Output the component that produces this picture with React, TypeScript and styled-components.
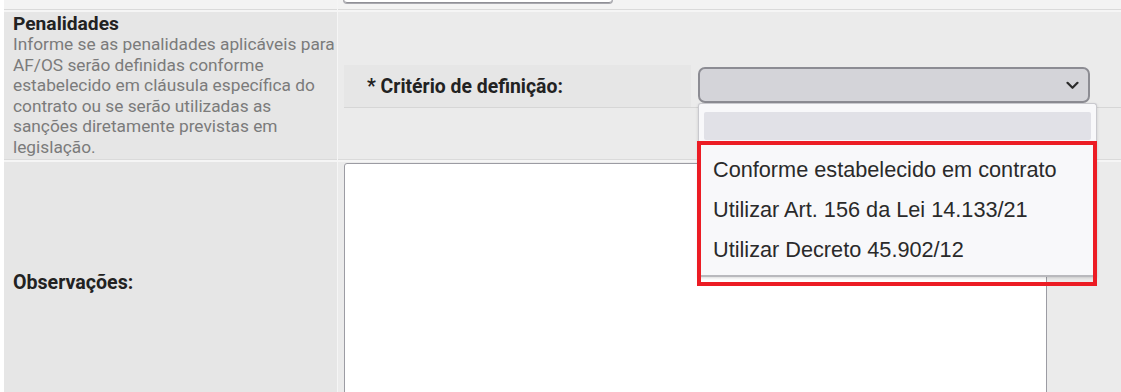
import React from 'react';
import styled, { createGlobalStyle } from 'styled-components';

const Global = createGlobalStyle`
  html, body { margin: 0; padding: 0; background: #ffffff; }
  body {
    width: 1121px;
    height: 392px;
    overflow: hidden;
    font-family: Roboto, "Liberation Sans", Arial, sans-serif;
  }
`;

const Page = styled.div`
  padding-left: 4px;
  height: 392px;
  overflow: hidden;
  background: #ffffff;
`;

const Table = styled.div`
  display: grid;
  grid-template-columns: 333px 1fr;
  grid-template-rows: 10px 148px 240px;
  row-gap: 2px;
  column-gap: 1px;
  background: #f5f5f5;
`;

const Cell = styled.div<{ $tone: 'label' | 'field' | 'top' }>`
  background: ${(p) =>
    p.$tone === 'label' ? '#e6e6e6' : p.$tone === 'field' ? '#ebebeb' : '#f3f3f3'};
  border-bottom: 1px solid #dadada;
  box-sizing: border-box;
  min-width: 0;
`;

const TopField = styled(Cell)`
  display: flex;
  align-items: flex-end;
  padding: 0 0 5px 5px;
  overflow: hidden;
`;

const TopInput = styled.div`
  width: 268px;
  height: 30px;
  background: #ffffff;
  border: 1px solid #a8a8ae;
  border-top: 0;
  border-radius: 0 0 4px 4px;
  box-shadow: inset 0 -1px 0 #8f8f96;
`;

const HelpCell = styled(Cell)`
  padding: 1px 0 0 9px;
`;

const Title = styled.div`
  font-weight: 700;
  font-size: 19.2px;
  line-height: 21px;
  color: #222222;
`;

const Help = styled.div`
  font-size: 17.3px;
  line-height: 20.6px;
  color: #7b7b7b;
`;

const SubTable = styled(Cell)`
  display: grid;
  grid-template-rows: 53px 43px 1fr;
  padding-left: 6px;
`;

const SubRow = styled.div<{ $line?: boolean }>`
  display: flex;
  align-items: stretch;
  border-bottom: ${(p) => (p.$line ? '1px solid #d6d6d6' : '0')};
`;

const SubLabel = styled.div`
  width: 347px;
  flex: none;
  background: #e6e6e6;
  display: flex;
  align-items: center;
  padding-left: 23px;
  box-sizing: border-box;
  font-weight: 700;
  font-size: 19.4px;
  color: #222222;
`;

const SelectWrap = styled.div`
  position: relative;
  margin-left: 7px;
  padding-top: 2px;
`;

const SelectBox = styled.div`
  width: 392px;
  height: 36px;
  box-sizing: border-box;
  background: #d4d4d9;
  border: 2px solid #8c8c93;
  border-radius: 7px;
  display: flex;
  align-items: center;
  justify-content: flex-end;
  padding-right: 9px;
`;

const Dropdown = styled.div`
  position: absolute;
  left: 0;
  top: 38px;
  width: 399px;
  box-sizing: border-box;
  background: #f8f8fa;
  border: 1px solid #c9c9ce;
  border-bottom: 0;
  border-radius: 3px 3px 0 0;
  box-shadow: 0 1px 3px rgba(0, 0, 0, 0.15);
  padding: 8px 5px 0 5px;
  z-index: 5;
`;

const Option = styled.div<{ $empty?: boolean }>`
  height: ${(p) => (p.$empty ? '28px' : '40px')};
  margin-bottom: ${(p) => (p.$empty ? '10px' : '0')};
  background: ${(p) => (p.$empty ? '#e1e1e7' : 'transparent')};
  border-radius: 2px;
  display: flex;
  align-items: center;
  padding-left: 9px;
  font-family: "Liberation Sans", Arial, sans-serif;
  font-size: 21.7px;
  color: #2a2a2a;
  white-space: nowrap;
`;

const ListEnd = styled.div`
  margin: 5px -5px 0;
  border-top: 2px solid #b9b9bd;
`;

const Highlight = styled.div`
  position: absolute;
  left: -1px;
  top: 76px;
  width: 400px;
  height: 145px;
  box-sizing: border-box;
  border: 4px solid #ec1c24;
  z-index: 6;
  pointer-events: none;
`;

const LabelCell = styled(Cell)`
  display: flex;
  align-items: center;
  padding-left: 9px;
  padding-top: 2px;
  font-weight: 700;
  font-size: 19.6px;
  color: #222222;
`;

const AreaCell = styled(Cell)`
  padding: 1px 0 0 6px;
`;

const TextArea = styled.textarea`
  display: block;
  width: 703px;
  height: 240px;
  box-sizing: border-box;
  border: 1.5px solid #9c9ca3;
  border-radius: 3px;
  background: #ffffff;
  resize: both;
  outline: none;
`;

function Chevron() {
  return (
    <svg width="13" height="9" viewBox="0 0 13 9" aria-hidden="true">
      <path d="M1.5 1.8 L6.5 6.8 L11.5 1.8" fill="none" stroke="#2b2b2b" strokeWidth="2.2" strokeLinecap="round" strokeLinejoin="round" />
    </svg>
  );
}

export default function App() {
  return (
    <>
      <Global />
      <Page>
        <Table>
          <Cell $tone="top" />
          <TopField $tone="top">
            <TopInput />
          </TopField>

          <HelpCell $tone="label">
            <Title>Penalidades</Title>
            <Help>
              Informe se as penalidades aplicáveis para AF/OS serão definidas conforme estabelecido em
              cláusula específica do contrato ou se serão utilizadas as sanções diretamente previstas em
              legislação.
            </Help>
          </HelpCell>
          <SubTable $tone="field">
            <SubRow />
            <SubRow $line>
              <SubLabel>* Critério de definição:</SubLabel>
              <SelectWrap>
                <SelectBox>
                  <Chevron />
                </SelectBox>
                <Dropdown>
                  <Option $empty />
                  <Option>Conforme estabelecido em contrato</Option>
                  <Option>Utilizar Art. 156 da Lei 14.133/21</Option>
                  <Option>Utilizar Decreto 45.902/12</Option>
                  <ListEnd />
                </Dropdown>
                <Highlight />
              </SelectWrap>
            </SubRow>
            <SubRow />
          </SubTable>

          <LabelCell $tone="label">Observações:</LabelCell>
          <AreaCell $tone="field">
            <TextArea />
          </AreaCell>
        </Table>
      </Page>
    </>
  );
}
